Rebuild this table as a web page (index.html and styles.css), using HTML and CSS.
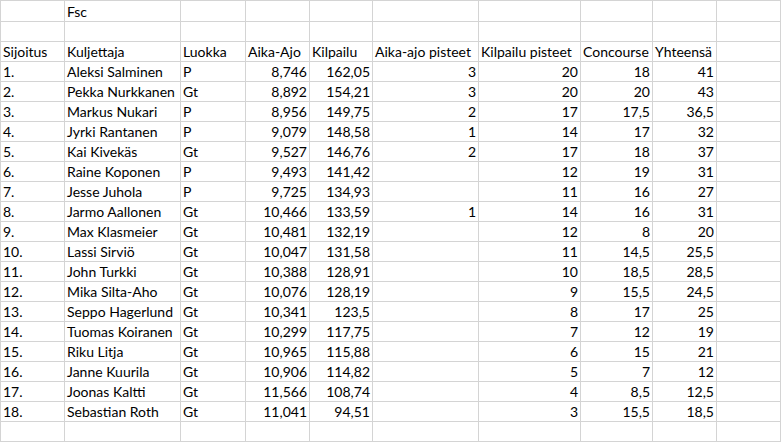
FILE: index.html
```html
<!DOCTYPE html>
<html lang="fi">
<head>
<meta charset="utf-8">
<title>Fsc</title>
<link rel="stylesheet" href="styles.css">
</head>
<body>
<table class="sheet">
<colgroup>
<col class="c1"><col class="c2"><col class="c3"><col class="c4"><col class="c5"><col class="c6"><col class="c7"><col class="c8"><col class="c9"><col class="c10">
</colgroup>
<tbody>
<tr class="first"><td></td><td>Fsc</td><td></td><td></td><td></td><td></td><td></td><td></td><td></td><td></td></tr>
<tr><td></td><td></td><td></td><td></td><td></td><td></td><td></td><td></td><td></td><td></td></tr>
<tr><td>Sijoitus</td><td>Kuljettaja</td><td>Luokka</td><td>Aika-Ajo</td><td>Kilpailu</td><td>Aika-ajo pisteet</td><td>Kilpailu pisteet</td><td>Concourse</td><td>Yhteensä</td><td></td></tr>
<tr><td>1.</td><td>Aleksi Salminen</td><td>P</td><td class="n">8,746</td><td class="n">162,05</td><td class="n">3</td><td class="n">20</td><td class="n">18</td><td class="n">41</td><td></td></tr>
<tr><td>2.</td><td>Pekka Nurkkanen</td><td>Gt</td><td class="n">8,892</td><td class="n">154,21</td><td class="n">3</td><td class="n">20</td><td class="n">20</td><td class="n">43</td><td></td></tr>
<tr><td>3.</td><td>Markus Nukari</td><td>P</td><td class="n">8,956</td><td class="n">149,75</td><td class="n">2</td><td class="n">17</td><td class="n">17,5</td><td class="n">36,5</td><td></td></tr>
<tr><td>4.</td><td>Jyrki Rantanen</td><td>P</td><td class="n">9,079</td><td class="n">148,58</td><td class="n">1</td><td class="n">14</td><td class="n">17</td><td class="n">32</td><td></td></tr>
<tr><td>5.</td><td>Kai Kivekäs</td><td>Gt</td><td class="n">9,527</td><td class="n">146,76</td><td class="n">2</td><td class="n">17</td><td class="n">18</td><td class="n">37</td><td></td></tr>
<tr><td>6.</td><td>Raine Koponen</td><td>P</td><td class="n">9,493</td><td class="n">141,42</td><td class="n"></td><td class="n">12</td><td class="n">19</td><td class="n">31</td><td></td></tr>
<tr><td>7.</td><td>Jesse Juhola</td><td>P</td><td class="n">9,725</td><td class="n">134,93</td><td class="n"></td><td class="n">11</td><td class="n">16</td><td class="n">27</td><td></td></tr>
<tr><td>8.</td><td>Jarmo Aallonen</td><td>Gt</td><td class="n">10,466</td><td class="n">133,59</td><td class="n">1</td><td class="n">14</td><td class="n">16</td><td class="n">31</td><td></td></tr>
<tr><td>9.</td><td>Max Klasmeier</td><td>Gt</td><td class="n">10,481</td><td class="n">132,19</td><td class="n"></td><td class="n">12</td><td class="n">8</td><td class="n">20</td><td></td></tr>
<tr><td>10.</td><td>Lassi Sirviö</td><td>Gt</td><td class="n">10,047</td><td class="n">131,58</td><td class="n"></td><td class="n">11</td><td class="n">14,5</td><td class="n">25,5</td><td></td></tr>
<tr><td>11.</td><td>John Turkki</td><td>Gt</td><td class="n">10,388</td><td class="n">128,91</td><td class="n"></td><td class="n">10</td><td class="n">18,5</td><td class="n">28,5</td><td></td></tr>
<tr><td>12.</td><td>Mika Silta-Aho</td><td>Gt</td><td class="n">10,076</td><td class="n">128,19</td><td class="n"></td><td class="n">9</td><td class="n">15,5</td><td class="n">24,5</td><td></td></tr>
<tr><td>13.</td><td>Seppo Hagerlund</td><td>Gt</td><td class="n">10,341</td><td class="n">123,5</td><td class="n"></td><td class="n">8</td><td class="n">17</td><td class="n">25</td><td></td></tr>
<tr><td>14.</td><td>Tuomas Koiranen</td><td>Gt</td><td class="n">10,299</td><td class="n">117,75</td><td class="n"></td><td class="n">7</td><td class="n">12</td><td class="n">19</td><td></td></tr>
<tr><td>15.</td><td>Riku Litja</td><td>Gt</td><td class="n">10,965</td><td class="n">115,88</td><td class="n"></td><td class="n">6</td><td class="n">15</td><td class="n">21</td><td></td></tr>
<tr><td>16.</td><td>Janne Kuurila</td><td>Gt</td><td class="n">10,906</td><td class="n">114,82</td><td class="n"></td><td class="n">5</td><td class="n">7</td><td class="n">12</td><td></td></tr>
<tr><td>17.</td><td>Joonas Kaltti</td><td>Gt</td><td class="n">11,566</td><td class="n">108,74</td><td class="n"></td><td class="n">4</td><td class="n">8,5</td><td class="n">12,5</td><td></td></tr>
<tr><td>18.</td><td>Sebastian Roth</td><td>Gt</td><td class="n">11,041</td><td class="n">94,51</td><td class="n"></td><td class="n">3</td><td class="n">15,5</td><td class="n">18,5</td><td></td></tr>
<tr><td></td><td></td><td></td><td></td><td></td><td></td><td></td><td></td><td></td><td></td></tr>
</tbody>
</table>
</body>
</html>
```

FILE: styles.css
```css
html, body {
  margin: 0;
  padding: 0;
  background: #ffffff;
}

.sheet {
  border-collapse: separate;
  border-spacing: 1px;
  background: #d4d4d4;
  table-layout: fixed;
  width: 781px;
  font-family: Lato, "Open Sans", sans-serif;
  font-size: 14px;
  color: #000000;
}

.c1 { width: 63px; }
.c2 { width: 115px; }
.c3 { width: 64px; }
.c4 { width: 63px; }
.c5 { width: 62px; }
.c6 { width: 105px; }
.c7 { width: 101px; }
.c8 { width: 71px; }
.c9 { width: 63px; }
.c10 { width: 63px; }

.sheet td {
  background: #ffffff;
  height: 19px;
  line-height: 19px;
  padding: 0 2px 0 2px;
  white-space: nowrap;
  overflow: visible;
  vertical-align: bottom;
  text-align: left;
}

.sheet tr.first td {
  height: 20px;
}

.sheet td.n {
  text-align: right;
}
```
